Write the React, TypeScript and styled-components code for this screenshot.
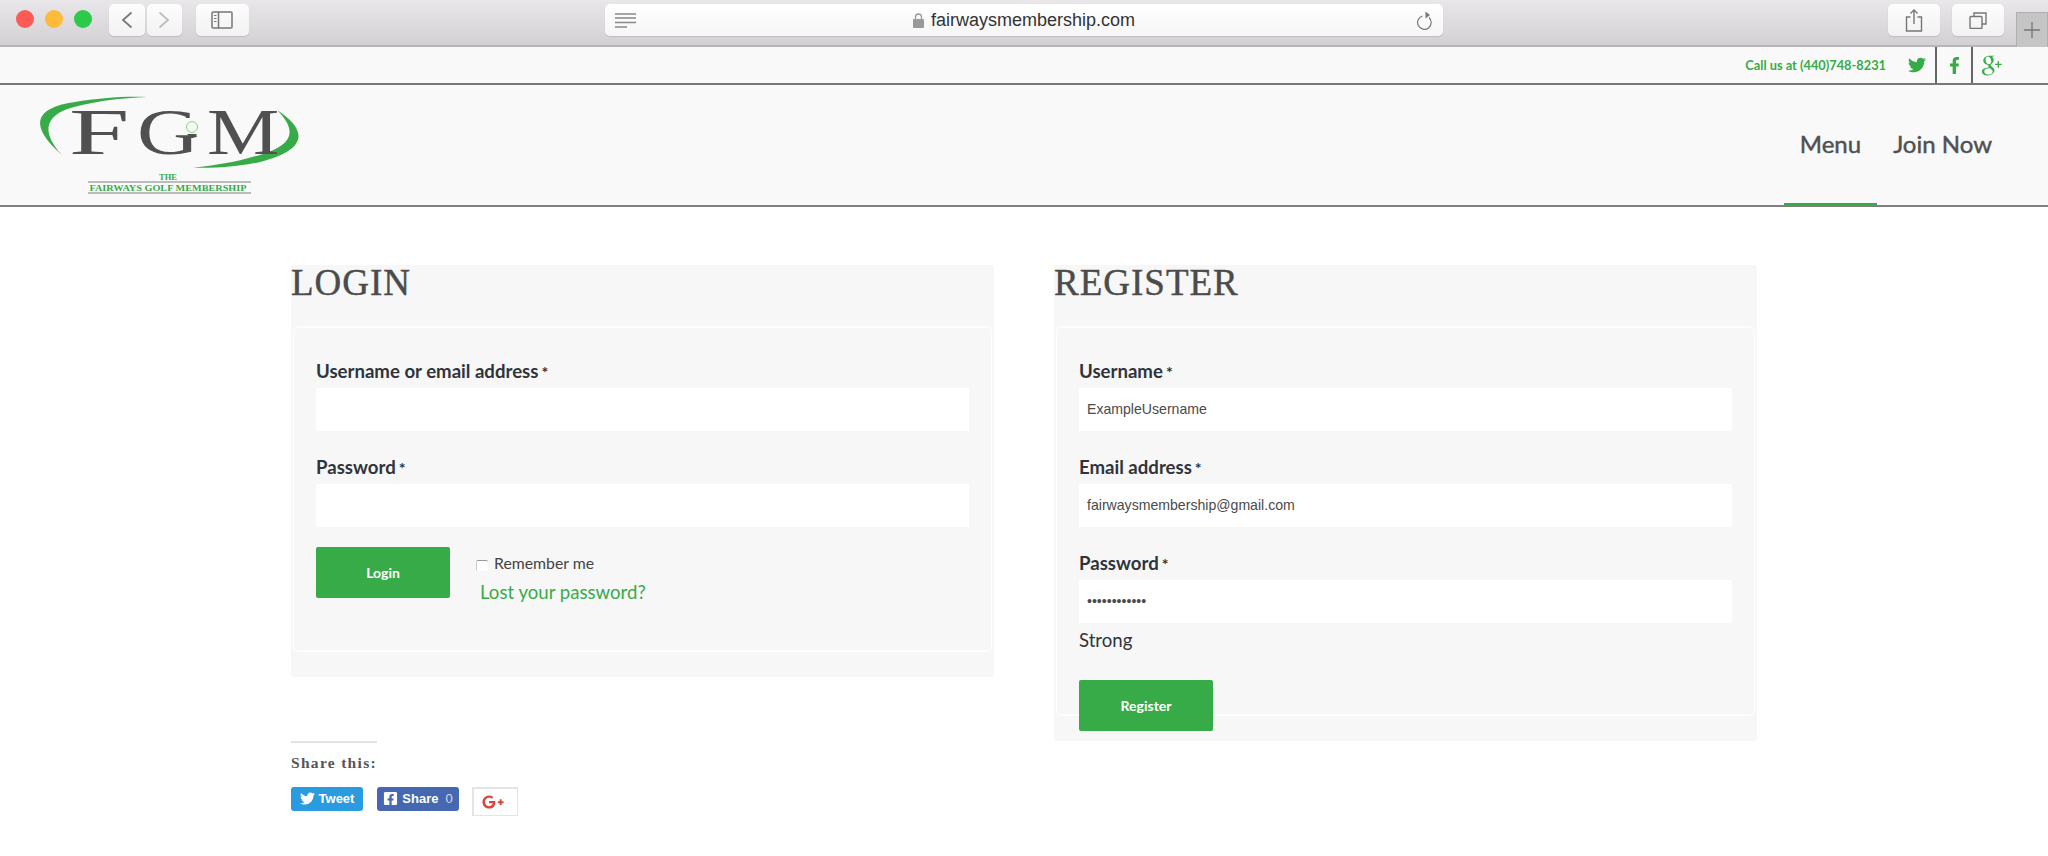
import React from 'react';
import styled, { createGlobalStyle } from 'styled-components';
import { FaTwitter, FaFacebookF, FaFacebookSquare, FaGooglePlusG } from 'react-icons/fa';
import { TiSocialGooglePlus } from 'react-icons/ti';

const green = '#37ab47';

const GlobalStyle = createGlobalStyle`
  html, body {
    margin: 0;
    padding: 0;
    background: #fff;
    overflow: hidden;
  }
  * {
    box-sizing: border-box;
  }
`;

const Page = styled.div`
  width: 2048px;
  height: 856px;
  font-family: Lato, 'Liberation Sans', sans-serif;
`;

/* safari window chrome */
const Chrome = styled.div`
  height: 47px;
  display: flex;
  align-items: flex-start;
  padding-top: 4px;
  background: linear-gradient(#e9e7e9, #d2d0d2);
  border-bottom: 2px solid #b6b6b6;
`;

const Lights = styled.div`
  display: flex;
  gap: 11px;
  margin: 6px 17px 0 16px;
`;

const Light = styled.span<{ $color: string }>`
  width: 18px;
  height: 18px;
  border-radius: 50%;
  background: ${(p) => p.$color};
`;

const ChromeButton = styled.div<{ $w: number; $ml?: number }>`
  width: ${(p) => p.$w}px;
  height: 32px;
  margin-left: ${(p) => p.$ml ?? 0}px;
  display: flex;
  align-items: center;
  justify-content: center;
  background: linear-gradient(#fdfdfd, #f2f2f2);
  border-radius: 5px;
  box-shadow: 0 1px 1px #bdbdbd;
`;

const AddressBar = styled.div`
  width: 839px;
  height: 32px;
  margin-left: 356px;
  padding: 0 10px;
  display: flex;
  align-items: center;
  justify-content: space-between;
  background: linear-gradient(#ffffff, #f6f6f6);
  border-radius: 5px;
  box-shadow: 0 1px 1px #bdbdbd;
`;

const Url = styled.div`
  display: flex;
  align-items: center;
  gap: 7px;
  padding-top: 1px;
  margin-right: 6px;
  font-family: 'Liberation Sans', Arial, sans-serif;
  font-size: 18px;
  color: #333;
`;

const PlusTab = styled.div`
  width: 32px;
  height: 35px;
  margin: 8px 0 0 12px;
  display: flex;
  align-items: center;
  justify-content: center;
  background: #c6c5c6;
  border: 1px solid #b0b0b0;
  border-bottom: 0;
`;

/* site header */
const TopBar = styled.div`
  height: 38px;
  display: flex;
  justify-content: flex-end;
  align-items: stretch;
  padding-right: 35px;
  background: #f9f9f9;
  border-bottom: 2px solid #777;
`;

const CallUs = styled.div`
  display: flex;
  align-items: center;
  margin-right: 22px;
  font-size: 12.8px;
  font-weight: 700;
  color: ${green};
`;

const SocialCell = styled.a<{ $w: number; $center?: boolean; $divided?: boolean; $pad?: number }>`
  width: ${(p) => p.$w}px;
  display: flex;
  align-items: center;
  color: ${green};
  padding-left: ${(p) => p.$pad ?? 0}px;
  justify-content: ${(p) => (p.$center ? 'center' : 'flex-start')};
  border-right: ${(p) => (p.$divided ? '2px solid #666' : '0')};
  svg {
    flex-shrink: 0;
  }
`;

const Header = styled.header`
  height: 122px;
  display: flex;
  justify-content: space-between;
  padding: 0 40px 0 30px;
  background: #f9f9f9;
  border-bottom: 2px solid #808080;
`;

const LogoMark = styled.svg`
  width: 280px;
  height: 115px;
  margin-top: 5px;
`;

const Nav = styled.nav`
  display: flex;
`;

const NavItem = styled.a<{ $active?: boolean }>`
  display: flex;
  align-items: center;
  height: 121px;
  padding: 0 16px 2px;
  font-size: 24px;
  font-weight: 400;
  -webkit-text-stroke: 0.45px #505050;
  color: #505050;
  border-bottom: 3px solid ${(p) => (p.$active ? green : 'transparent')};
`;

/* account forms */
const Main = styled.main`
  display: grid;
  grid-template-columns: 703px 703px;
  column-gap: 60px;
  align-items: start;
  padding: 58px 0 0 291px;
`;

const Panel = styled.section`
  background: #f7f7f7;
  border-radius: 3px;
  padding-bottom: 25px;
`;

const Heading = styled.h2`
  height: 61px;
  margin: 0;
  font-family: 'Liberation Serif', 'Times New Roman', serif;
  font-size: 37px;
  line-height: 35px;
  font-weight: 400;
  letter-spacing: 1px;
  -webkit-text-stroke: 0.4px #4b4b4b;
  color: #4b4b4b;
`;

const Form = styled.form`
  margin: 0 2px;
  padding: 28.5px 22px 0;
  border: solid #fdfdfd;
  border-width: 2px 1px;
  border-radius: 5px;
`;

const Field = styled.div`
  margin-bottom: 21.5px;
`;

const Label = styled.label`
  display: block;
  height: 28px;
  margin-bottom: 3px;
  font-size: 18.6px;
  line-height: 28px;
  font-weight: 700;
  color: #2f343b;
`;

const Required = styled.span`
  margin-left: 3px;
  font-size: 16px;
  font-weight: 700;
`;

const Input = styled.input`
  display: block;
  width: 100%;
  height: 43.5px;
  padding: 0 8px;
  border: 0;
  outline: 0;
  background: #fff;
  font-family: 'Liberation Sans', Arial, sans-serif;
  font-size: 14.1px;
  color: #4a4a4a;
`;

const LoginRow = styled.div`
  display: flex;
  margin-top: -2px;
  padding-bottom: 46px;
`;

const SubmitButton = styled.button<{ $overflow?: boolean }>`
  display: block;
  width: 134px;
  height: 51px;
  border: 0;
  border-radius: 2px;
  background: ${green};
  font-family: Lato, sans-serif;
  font-size: 14px;
  font-weight: 700;
  color: #fff;
  margin-bottom: ${(p) => (p.$overflow ? '-17px' : '0')};
`;

const LoginExtras = styled.div`
  margin-left: 26px;
  padding-top: 4px;
`;

const Remember = styled.label`
  display: flex;
  align-items: center;
  gap: 6px;
  height: 24px;
  font-size: 15.8px;
  color: #444;
`;

const Checkbox = styled.input`
  appearance: none;
  width: 12px;
  height: 11px;
  margin: 6px 0 0;
  background: #fff;
  border-top: 1px solid #999;
  border-left: 1px solid #ccc;
  border-radius: 2px;
`;

const LostLink = styled.a`
  display: block;
  margin: 5px 0 0 4px;
  font-size: 18.6px;
  line-height: 24px;
  color: ${green};
`;

const Strength = styled.div`
  margin: -17px 0 28px;
  font-size: 18.6px;
  line-height: 24px;
  color: #2f343b;
`;

/* share buttons */
const ShareBlock = styled.div`
  margin-top: 64px;
`;

const ShareTitle = styled.h3`
  display: inline-block;
  margin: 0;
  padding-top: 11px;
  border-top: 2px solid #e3e3e3;
  font-family: 'Liberation Serif', serif;
  font-size: 15.5px;
  line-height: 18px;
  font-weight: 700;
  letter-spacing: 1.3px;
  color: #555;
`;

const ShareRow = styled.div`
  display: flex;
  align-items: flex-start;
  gap: 14px;
  margin-top: 15px;
`;

const ShareButton = styled.a<{ $bg: string; $w: number }>`
  width: ${(p) => p.$w}px;
  height: 24px;
  display: flex;
  align-items: center;
  justify-content: center;
  gap: 4px;
  border-radius: 3px;
  background: ${(p) => p.$bg};
  font-family: 'Liberation Sans', Arial, sans-serif;
  font-size: 13px;
  font-weight: 700;
  color: #fff;
`;

const ShareCount = styled.span`
  margin-left: 3px;
  font-weight: 400;
  opacity: 0.75;
`;

const GooglePlus = styled.a`
  width: 46px;
  height: 29px;
  margin-left: -1px;
  display: flex;
  align-items: center;
  justify-content: center;
  padding-right: 6px;
  background: #fff;
  border: 1px solid #e4e4e4;
  border-top-width: 2px;
  border-left-width: 2px;
  color: #d8473d;
`;

const Logo = () => (
  <LogoMark viewBox="30 90 280 115">
    <path d="M62 155 C30 127 32 108 75 102 C98 98 125 96 147 97 C120 98 98 101 78 106 C46 113 39 130 62 155 Z" fill={green} />
    <path d="M277 110 C308 130 308 150 260 162 C238 167 215 168 193 168 C215 165 236 162 252 157 C293 147 299 132 277 110 Z" fill={green} />
    <g fontFamily="'Liberation Serif', serif" fontSize="65" fill="#505050">
      <text transform="translate(69 154) scale(1.67 1)">F</text>
      <text transform="translate(137 154) scale(1.33 1)">G</text>
      <text transform="translate(207 154) scale(1.25 1)">M</text>
    </g>
    <rect x="185" y="118" width="14" height="14" fill="#f9f9f9" />
    <circle cx="192" cy="127" r="5.5" fill="#f3faf3" stroke="#8fd09a" strokeWidth="1" />
    <path d="M187 134 H197 L193 138 H191 Z" fill="#505050" />
    <path d="M88 182 H251 M88 193 H251" stroke="#a8a8a8" strokeWidth="1.3" />
    <g fontFamily="'Liberation Serif', serif" fontWeight="700" fill={green} textAnchor="middle">
      <text x="168" y="180" fontSize="8.5">THE</text>
      <text x="168" y="191" fontSize="9" textLength="157" lengthAdjust="spacingAndGlyphs">FAIRWAYS GOLF MEMBERSHIP</text>
    </g>
  </LogoMark>
);

const Req = () => <Required>*</Required>;

const App = () => {
  return (
    <Page>
      <GlobalStyle />
      <Chrome>
        <Lights>
          <Light $color="#fc5a57" />
          <Light $color="#fdbb39" />
          <Light $color="#2dc94a" />
        </Lights>
        <ChromeButton $w={36}>
          <svg width="12" height="18" viewBox="0 0 12 18" fill="none" stroke="#777" strokeWidth="1.8">
            <path d="M10.5 1.5 L2 9 L10.5 16.5" />
          </svg>
        </ChromeButton>
        <ChromeButton $w={35} $ml={2}>
          <svg width="12" height="18" viewBox="0 0 12 18" fill="none" stroke="#bdbdbd" strokeWidth="1.8">
            <path d="M1.5 1.5 L10 9 L1.5 16.5" />
          </svg>
        </ChromeButton>
        <ChromeButton $w={53} $ml={14}>
          <svg width="22" height="18" viewBox="0 0 22 18" fill="none" stroke="#777" strokeWidth="1.5">
            <rect x="1" y="1" width="20" height="16" rx="1" />
            <path d="M7.5 1 V17" />
            <path d="M3 4.5 H5.5 M3 7.5 H5.5 M3 10.5 H5.5" strokeWidth="1.2" />
          </svg>
        </ChromeButton>
        <AddressBar>
          <svg width="22" height="15" viewBox="0 0 22 15" fill="none" stroke="#888" strokeWidth="1.4">
            <path d="M0 1 H21 M0 5 H21 M0 9.5 H21 M0 14 H12" />
          </svg>
          <Url>
            <svg width="11" height="15" viewBox="0 0 11 15">
              <path d="M2.5 6 V4 a3 3 0 0 1 6 0 V6" fill="none" stroke="#999" strokeWidth="1.3" />
              <rect x="0" y="6" width="11" height="9" rx="1" fill="#999" />
            </svg>
            fairwaysmembership.com
          </Url>
          <svg width="16" height="19" viewBox="0 0 16 19" fill="none" stroke="#777" strokeWidth="1.2">
            <path d="M5.5 5 A6.8 6.8 0 1 0 12 6.5" />
            <path d="M8.5 0.5 L13 4 L8.5 7.5 Z" fill="#777" stroke="none" />
          </svg>
        </AddressBar>
        <ChromeButton $w={52} $ml={445}>
          <svg width="18" height="23" viewBox="0 0 18 23" fill="none" stroke="#777" strokeWidth="1.4">
            <path d="M5.5 8 H1.5 V22 H16.5 V8 H12.5" />
            <path d="M9 15 V1 M5.5 4.5 L9 1 L12.5 4.5" />
          </svg>
        </ChromeButton>
        <ChromeButton $w={52} $ml={12}>
          <svg width="18" height="17" viewBox="0 0 18 17" fill="none" stroke="#777" strokeWidth="1.4">
            <rect x="1" y="4.5" width="12" height="12" rx="1" />
            <path d="M5 4.5 V1 H17 V12 H13" />
          </svg>
        </ChromeButton>
        <PlusTab>
          <svg width="16" height="16" viewBox="0 0 16 16" stroke="#777" strokeWidth="1.3">
            <path d="M8 0 V16 M0 8 H16" />
          </svg>
        </PlusTab>
      </Chrome>

      <TopBar>
        <CallUs>Call us at (440)748-8231</CallUs>
        <SocialCell $w={29} $divided>
          <FaTwitter size={18} />
        </SocialCell>
        <SocialCell $w={36} $center $divided>
          <FaFacebookF size={17} />
        </SocialCell>
        <SocialCell $w={40} $pad={2}>
          <TiSocialGooglePlus size={32} />
        </SocialCell>
      </TopBar>

      <Header>
        <Logo />
        <Nav>
          <NavItem $active>Menu</NavItem>
          <NavItem>Join Now</NavItem>
        </Nav>
      </Header>

      <Main>
        <div>
          <Panel>
            <Heading>LOGIN</Heading>
            <Form>
              <Field>
                <Label>Username or email address<Req /></Label>
                <Input type="text" readOnly />
              </Field>
              <Field>
                <Label>Password<Req /></Label>
                <Input type="password" readOnly />
              </Field>
              <LoginRow>
                <SubmitButton type="button">Login</SubmitButton>
                <LoginExtras>
                  <Remember>
                    <Checkbox type="checkbox" />
                    Remember me
                  </Remember>
                  <LostLink>Lost your password?</LostLink>
                </LoginExtras>
              </LoginRow>
            </Form>
          </Panel>

          <ShareBlock>
            <ShareTitle>Share this:</ShareTitle>
            <ShareRow>
              <ShareButton $bg="#2b9be0" $w={72}>
                <FaTwitter size={15} />
                Tweet
              </ShareButton>
              <ShareButton $bg="#4568b0" $w={82}>
                <FaFacebookSquare size={15} />
                Share
                <ShareCount>0</ShareCount>
              </ShareButton>
              <GooglePlus>
                <FaGooglePlusG size={22} />
              </GooglePlus>
            </ShareRow>
          </ShareBlock>
        </div>

        <Panel>
          <Heading>REGISTER</Heading>
          <Form>
            <Field>
              <Label>Username<Req /></Label>
              <Input type="text" readOnly value="ExampleUsername" />
            </Field>
            <Field>
              <Label>Email address<Req /></Label>
              <Input type="text" readOnly value="fairwaysmembership@gmail.com" />
            </Field>
            <Field>
              <Label>Password<Req /></Label>
              <Input type="password" readOnly value="abcdefghijkl" />
            </Field>
            <Strength>Strong</Strength>
            <SubmitButton type="button" $overflow>Register</SubmitButton>
          </Form>
        </Panel>
      </Main>
    </Page>
  );
};

export default App;
